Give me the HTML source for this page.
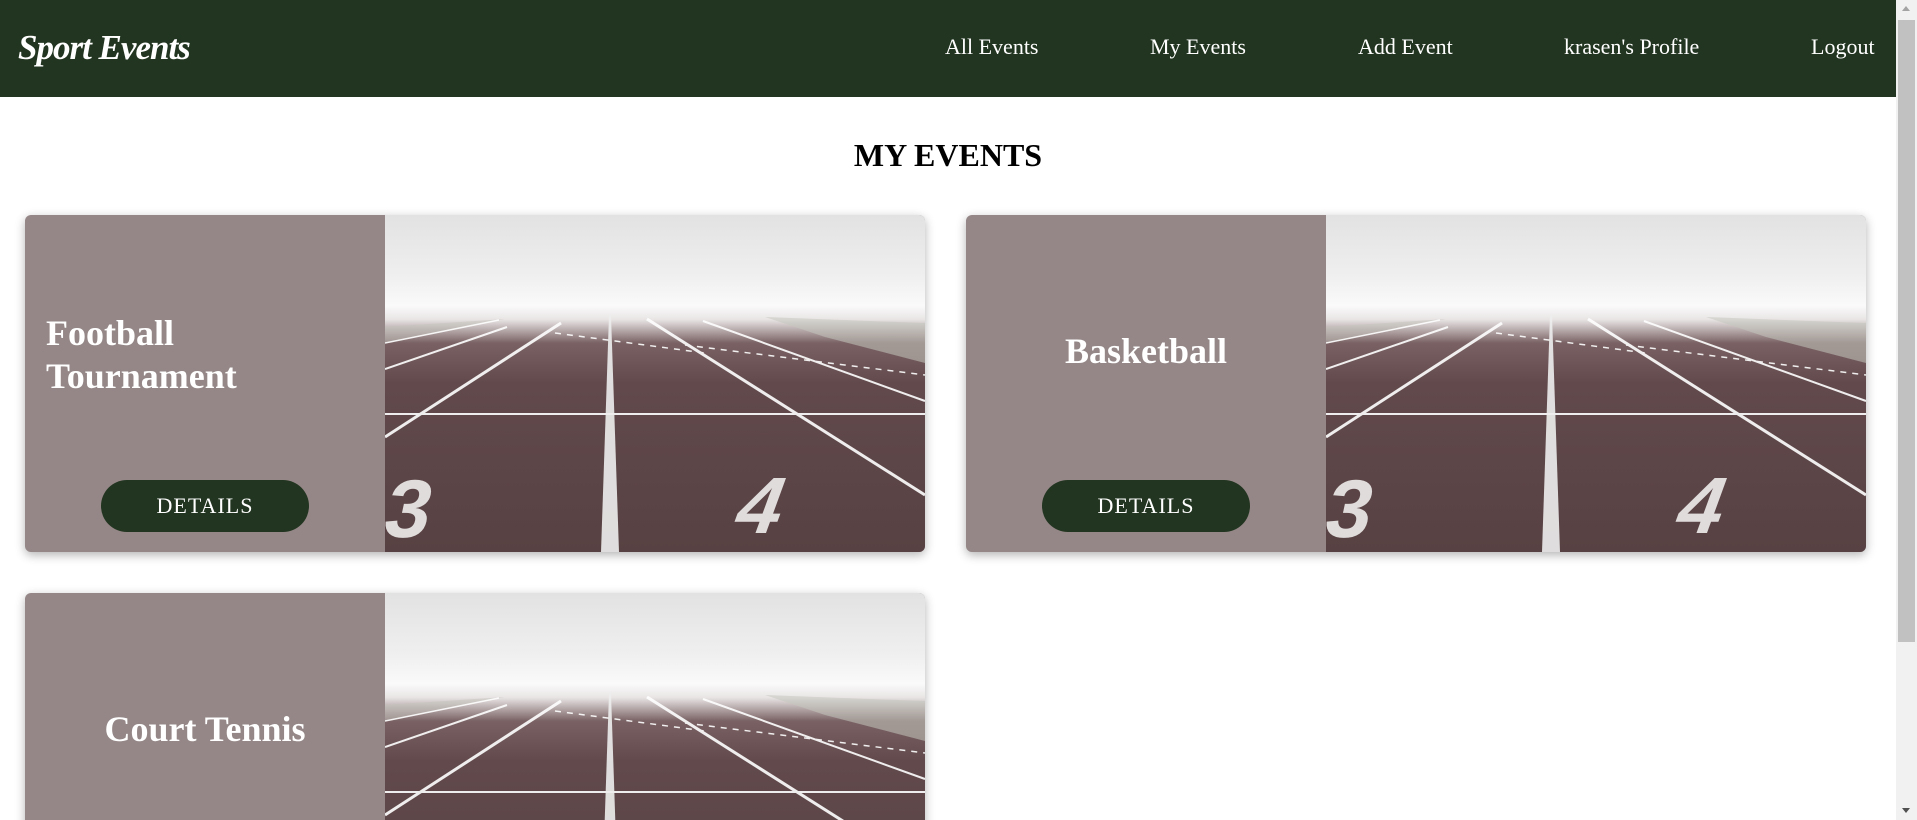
<!DOCTYPE html>
<html><head><meta charset="utf-8">
<style>
html,body{margin:0;padding:0;width:1917px;height:820px;overflow:hidden;}
body{background:#fff;position:relative;font-family:"Liberation Serif",serif;}
#wrap{position:relative;width:1917px;height:820px;overflow:hidden;}
.hdr{position:absolute;left:0;top:0;width:1896px;height:97px;background:#223520;}
.logo{position:absolute;left:18px;top:26px;color:#fff;font-size:35px;font-style:italic;font-weight:bold;letter-spacing:-1px;line-height:44px;}
.nav{position:absolute;top:34px;color:#fff;font-size:22px;line-height:26px;white-space:nowrap;}
h1{position:absolute;left:0;width:1896px;top:135px;margin:0;text-align:center;font-size:32px;line-height:40px;font-weight:bold;}
.card{position:absolute;width:900px;height:337px;background:#958787;border-radius:6px;box-shadow:0 3px 10px rgba(0,0,0,.3);overflow:hidden;}
.card svg{position:absolute;left:360px;top:0;width:540px;height:337px;}
.ttl{position:absolute;color:#fff;font-weight:bold;font-size:36px;line-height:43px;}
.btn{position:absolute;left:76px;top:265px;width:208px;height:52px;border-radius:26px;background:#223520;color:#fff;font-size:22px;line-height:52px;text-align:center;letter-spacing:1px;}
.sb{position:absolute;left:1896px;top:0;width:21px;height:820px;background:#f1f1f1;}
.th{position:absolute;left:1898px;top:20px;width:17px;height:622px;background:#c1c1c1;}
</style></head><body><div id="wrap">
<div class="hdr">
<div class="logo">Sport Events</div>
<div class="nav" style="left:945px">All Events</div>
<div class="nav" style="left:1150px">My Events</div>
<div class="nav" style="left:1358px">Add Event</div>
<div class="nav" style="left:1564px">krasen's Profile</div>
<div class="nav" style="left:1811px">Logout</div>
</div>
<h1>MY EVENTS</h1>

<svg width="0" height="0" style="position:absolute">
<defs>
<linearGradient id="fog" x1="0" y1="0" x2="0" y2="1">
<stop offset="0" stop-color="#e2e2e2"/><stop offset="0.18" stop-color="#efefef"/><stop offset="0.27" stop-color="#fafafa"/><stop offset="0.31" stop-color="#e9e5e5"/><stop offset="0.38" stop-color="#7a6264"/><stop offset="0.5" stop-color="#624a4c"/><stop offset="1" stop-color="#574142"/>
</linearGradient>
<symbol id="trk" viewBox="0 0 540 337">
<rect width="540" height="337" fill="url(#fog)"/>
<path d="M380 102 L540 108 L540 148 L440 122 Z" fill="#c4c6bd" opacity=".55"/>
<path d="M0 112 L120 104 L0 128 Z" fill="#c3c4bc" opacity=".5"/>
<g stroke="#fff" fill="none" opacity=".9">
<path d="M224 100 L216 337 L234 337 L226 100 Z" fill="#eee" stroke="none"/>
<path d="M176 108 L0 222" stroke-width="3"/>
<path d="M122 112 L0 154" stroke-width="2"/>
<path d="M114 105 L0 128" stroke-width="1.5"/>
<path d="M262 104 L540 280" stroke-width="3"/>
<path d="M318 106 L540 186" stroke-width="2"/>
<path d="M0 199 L540 199" stroke-width="2"/>
<path d="M170 118 L320 138" stroke-width="1.5" stroke-dasharray="6 6"/>
<path d="M300 130 L540 160" stroke-width="1.5" stroke-dasharray="6 6"/>
</g>
<text x="2" y="322" font-family="Liberation Sans,sans-serif" font-weight="bold" font-size="82" fill="#e0dcdc" transform="skewX(-12) translate(62 0)">3</text>
<text x="360" y="318" font-family="Liberation Sans,sans-serif" font-weight="bold" font-size="80" fill="#e0dcdc" transform="skewX(-20) translate(100 0)">4</text>
</symbol>
</defs></svg>

<div class="card" style="left:25px;top:215px">
<div class="ttl" style="left:21px;top:97px">Football<br>Tournament</div>
<div class="btn">DETAILS</div>
<svg viewBox="0 0 540 337"><use href="#trk"/></svg>
</div>
<div class="card" style="left:966px;top:215px">
<div class="ttl" style="left:0;width:360px;text-align:center;top:115px">Basketball</div>
<div class="btn">DETAILS</div>
<svg viewBox="0 0 540 337"><use href="#trk"/></svg>
</div>
<div class="card" style="left:25px;top:593px">
<div class="ttl" style="left:0;width:360px;text-align:center;top:115px">Court Tennis</div>
<svg viewBox="0 0 540 337"><use href="#trk"/></svg>
</div>

<div class="sb"></div><div class="th"></div>
<div style="position:absolute;left:1902px;top:6px;width:0;height:0;border-left:4px solid transparent;border-right:4px solid transparent;border-bottom:5px solid #a3a3a3"></div>
<div style="position:absolute;left:1902px;top:808px;width:0;height:0;border-left:4px solid transparent;border-right:4px solid transparent;border-top:5px solid #505050"></div>
</div></body></html>
